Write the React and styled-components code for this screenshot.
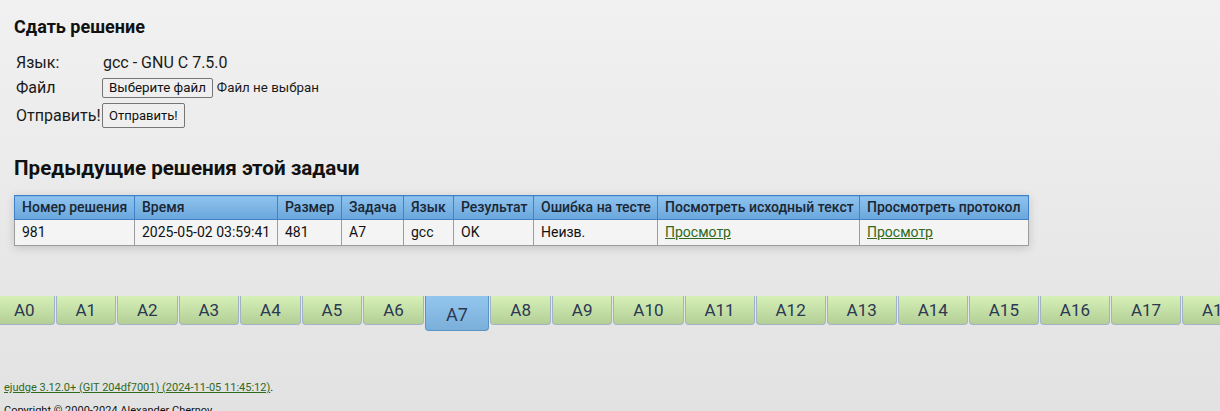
import React from "react";
import styled, { createGlobalStyle } from "styled-components";

const Global = createGlobalStyle`
  html, body { margin: 0; padding: 0; overflow: hidden; }
  html { background: linear-gradient(#f1f1f1, #e2e2e2) fixed; min-height: 100%; }
  body { font-family: Roboto, "Liberation Sans", Arial, sans-serif; color: #141414; }
`;

const Page = styled.div`
  width: 1220px;
  height: 411px;
  overflow: hidden;
`;

const Content = styled.div`
  padding-left: 14px;
`;

const Title = styled.h2`
  margin: ${(p) => p.$top}px 0 0;
  font-size: ${(p) => p.$size}px;
  line-height: ${(p) => p.$lh}px;
  font-weight: 700;
  color: #111;
`;

const Form = styled.div`
  display: grid;
  grid-template-columns: 86px auto;
  grid-template-rows: 24px 23px 28px;
  row-gap: 2px;
  align-items: center;
  margin-top: 12px;
  padding-left: 2px;
  font-size: 16px;
  color: #1a1a1a;
`;

const Label = styled.div`
  white-space: nowrap;
`;

const Value = styled.div`
  display: flex;
  align-items: center;
  gap: 4px;
  padding-left: ${(p) => (p.$shift ? 1 : 0)}px;
  font-size: ${(p) => (p.$small ? 13.33 : 16)}px;
`;

const Btn = styled.button`
  font-family: Roboto, "Liberation Sans", Arial, sans-serif;
  font-size: ${(p) => p.$size}px;
  height: ${(p) => p.$h}px;
  padding: 0 ${(p) => p.$px}px;
  background: #efefef;
  color: #111;
  border: 1px solid #767676;
  border-radius: 2px;
  line-height: 1;
`;

const Table = styled.table`
  margin-top: 14px;
  width: 1014px;
  table-layout: fixed;
  border-collapse: collapse;
  font-size: 14px;
  box-shadow: 0 2px 9px rgba(0, 0, 0, 0.16);
`;

const Th = styled.th`
  text-align: left;
  font-weight: 500;
  color: #1b2733;
  padding: 3px 7px;
  line-height: 17px;
  white-space: nowrap;
  background: linear-gradient(#8ec3ee, #6aa6dc);
  border: 1px solid #3f80c6;
`;

const Td = styled.td`
  padding: 4px 7px;
  line-height: 17px;
  white-space: nowrap;
  background: #f4f4f4;
  border: 1px solid #9c9c9c;
  color: #111;
`;

const Link = styled.a`
  color: #2f6a1c;
  text-decoration: underline;
`;

const Tabs = styled.div`
  display: flex;
  align-items: flex-start;
  margin: 50px 0 0 -6px;
  height: 35px;
`;

const Tab = styled.div`
  flex: none;
  box-sizing: border-box;
  height: ${(p) => (p.$active ? 35 : 29)}px;
  padding: ${(p) => (p.$active ? "3px 20.4px 0" : "0 18.94px")};
  margin-right: 1px;
  font-size: ${(p) => (p.$active ? 18 : 17)}px;
  line-height: ${(p) => (p.$active ? 32 : 29)}px;
  color: #2b3852;
  border: 1px solid ${(p) => (p.$active ? "#5b93c2" : "#a3b2c7")};
  border-top: none;
  border-radius: 0 0 4px 4px;
  background: ${(p) =>
    p.$active
      ? "linear-gradient(#93c6ef, #7aafd9)"
      : "linear-gradient(#d6f0b8, #b3cf96)"};
`;

const Footer = styled.div`
  padding-left: 4px;
  font-size: 11px;
  color: #111;
`;

const FootLine = styled.p`
  margin: ${(p) => p.$top}px 0 0;
  line-height: 13px;
  white-space: nowrap;
`;

const cols = [
  ["Номер решения", 120],
  ["Время", 143],
  ["Размер", 64],
  ["Задача", 62],
  ["Язык", 50],
  ["Результат", 80],
  ["Ошибка на тесте", 124],
  ["Посмотреть исходный текст", 202],
  ["Просмотреть протокол", 169],
];

const tabs = Array.from({ length: 19 }, (_, i) => "A" + i);

export default function App() {
  return (
    <Page>
      <Global />
      <Content>
        <Title $top={16} $size={18} $lh={22}>Сдать решение</Title>
        <Form>
          <Label>Язык:</Label>
          <Value $shift>gcc - GNU C 7.5.0</Value>
          <Label>Файл</Label>
          <Value $small>
            <Btn $size={13.33} $h={20} $px={6}>Выберите файл</Btn>
            <span>Файл не выбран</span>
          </Value>
          <Label>Отправить!</Label>
          <Value>
            <Btn $size={13} $h={25} $px={6}>Отправить!</Btn>
          </Value>
        </Form>
        <Title $top={26} $size={20.6} $lh={26}>Предыдущие решения этой задачи</Title>
        <Table>
          <colgroup>
            {cols.map(([n, w]) => (
              <col key={n} style={{ width: w }} />
            ))}
          </colgroup>
          <thead>
            <tr>
              {cols.map(([n]) => (
                <Th key={n}>{n}</Th>
              ))}
            </tr>
          </thead>
          <tbody>
            <tr>
              <Td>981</Td>
              <Td>2025-05-02 03:59:41</Td>
              <Td>481</Td>
              <Td>A7</Td>
              <Td>gcc</Td>
              <Td>OK</Td>
              <Td>Неизв.</Td>
              <Td><Link href="#">Просмотр</Link></Td>
              <Td><Link href="#">Просмотр</Link></Td>
            </tr>
          </tbody>
        </Table>
      </Content>
      <Tabs>
        {tabs.map((t) => (
          <Tab key={t} $active={t === "A7"}>{t}</Tab>
        ))}
      </Tabs>
      <Footer>
        <FootLine $top={50}>
          <Link href="#">ejudge 3.12.0+ (GIT 204df7001) (2024-11-05 11:45:12)</Link>.
        </FootLine>
        <FootLine $top={10}>Copyright © 2000-2024 Alexander Chernov.</FootLine>
      </Footer>
    </Page>
  );
}
